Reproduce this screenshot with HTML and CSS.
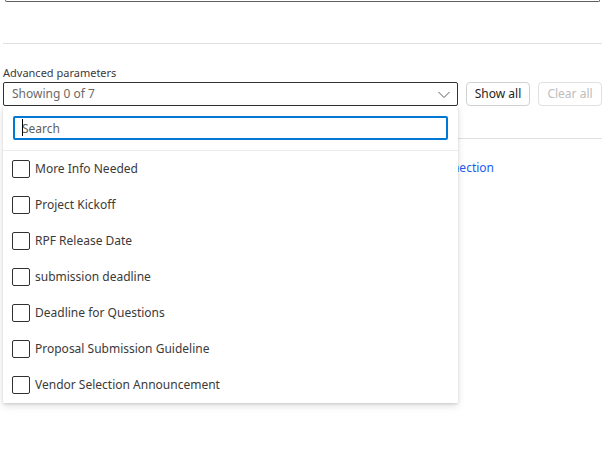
FILE: index.html
```html
<!DOCTYPE html>
<html lang="en">
<head>
<meta charset="utf-8">
<meta name="viewport" content="width=device-width, initial-scale=1">
<title>Advanced parameters</title>
<link rel="stylesheet" href="styles.css">
</head>
<body>
<main class="panel">
  <div class="field-end"></div>
  <section class="parameters">
    <label class="label" for="parameters">Advanced parameters</label>
    <div class="row">
      <div class="dropdown">
        <select class="select" id="parameters"><option>Showing 0 of 7</option></select>
        <svg class="chevron" viewBox="0 0 12 8" aria-hidden="true"><path d="M.5 1 6 6.5 11.5 1"/></svg>
        <div class="menu">
          <div class="search">
            <input class="search-input" type="text" placeholder="Search" aria-label="Search">
            <span class="caret"></span>
          </div>
          <ul class="options">
            <li><label class="option"><input class="check" type="checkbox">More Info Needed</label></li>
            <li><label class="option"><input class="check" type="checkbox">Project Kickoff</label></li>
            <li><label class="option"><input class="check" type="checkbox">RPF Release Date</label></li>
            <li><label class="option"><input class="check" type="checkbox">submission deadline</label></li>
            <li><label class="option"><input class="check" type="checkbox">Deadline for Questions</label></li>
            <li><label class="option"><input class="check" type="checkbox">Proposal Submission Guideline</label></li>
            <li><label class="option"><input class="check" type="checkbox">Vendor Selection Announcement</label></li>
          </ul>
        </div>
      </div>
      <button class="button" type="button">Show all</button>
      <button class="button" type="button" disabled>Clear all</button>
    </div>
  </section>
  <footer class="connection"><a class="link" href="#">Change connection</a></footer>
</main>
</body>
</html>
```
FILE: styles.css
```css
* { box-sizing: border-box; }

body {
  margin: 0;
  background: #fff;
  color: #3b3a39;
  font: 12px/18px "Noto Sans", "Open Sans", sans-serif;
}

.panel {
  min-height: 100vh;
  padding: 0 11px 0 3px;
}

.field-end {
  height: 2px;
  margin: 0 2px 41px;
  border: 1px solid #605e5c;
  border-top: 0;
  border-radius: 0 0 2px 2px;
}

.parameters {
  padding: 20px 0 32px;
  border-top: 1px solid #e1dfdd;
  border-bottom: 1px solid #e1dfdd;
}

.label {
  display: block;
  font-size: 11px;
}

.row { display: flex; gap: 8px; }

.dropdown { position: relative; flex: 1; }

.select {
  display: block;
  width: 100%;
  height: 24px;
  padding: 0 28px 0 8px;
  appearance: none;
  border: 1px solid #323130;
  border-radius: 2px;
  background: #fff;
  color: #6b6967;
  font: inherit;
}

.chevron {
  position: absolute;
  top: 9px;
  right: 8px;
  width: 12px;
  height: 8px;
  fill: none;
  stroke: #605e5c;
  pointer-events: none;
}

.menu {
  position: absolute;
  z-index: 1;
  top: 100%;
  left: 0;
  width: 100%;
  background: #fff;
  box-shadow: 0 3px 7px rgba(0, 0, 0, .13), 0 1px 2px rgba(0, 0, 0, .11);
}

.search {
  position: relative;
  padding: 10px;
  border-bottom: 1px solid #edebe9;
}

.search-input {
  display: block;
  width: 100%;
  height: 24px;
  padding: 0 7px;
  border: 2px solid #0078d4;
  border-radius: 2px;
  outline: 0;
  font: inherit;
}

.search-input::placeholder { color: #605e5c; opacity: 1; }

.caret {
  position: absolute;
  top: 13px;
  left: 19px;
  width: 1px;
  height: 17px;
  background: #000;
}

.options { margin: 0; padding: 0; list-style: none; }

.option {
  display: flex;
  align-items: center;
  gap: 5px;
  height: 36px;
  padding: 0 9px;
}

.check {
  width: 18px;
  height: 18px;
  margin: 0;
  appearance: none;
  border: 1px solid #323130;
  border-radius: 2px;
  background: #fff;
}

.button {
  width: 64px;
  height: 24px;
  padding: 0;
  border: 1px solid #d1d1d1;
  border-radius: 4px;
  background: #fff;
  color: #242424;
  font: inherit;
}

.button:disabled { border-color: #e0e0e0; color: #bdbdbd; }

.connection {
  padding: 20px 108px 0 0;
  text-align: right;
}

.link { color: #1a5cf0; text-decoration: none; }
```
